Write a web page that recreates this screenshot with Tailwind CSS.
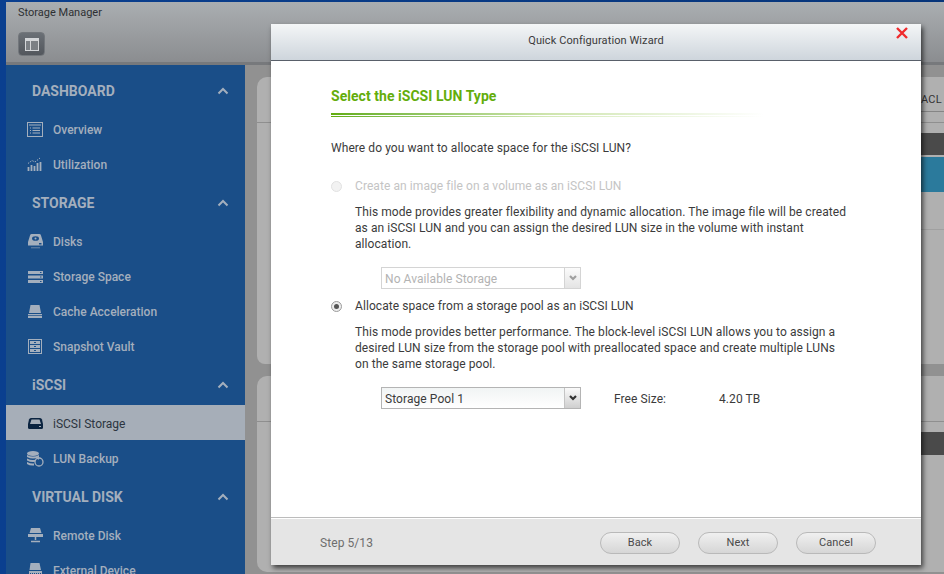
<!DOCTYPE html>
<html>
<head>
<meta charset="utf-8">
<script src="https://cdn.jsdelivr.net/npm/@tailwindcss/browser@4"></script>
</head>
<body class="m-0">
<div class="relative w-[944px] h-[574px] overflow-hidden bg-gradient-to-r from-[#0a3f8f] to-[#07357a] pl-[6px] pt-[2px] font-['Roboto','Liberation_Sans',sans-serif]">
  <div class="flex flex-col h-[572px] w-[938px]">
    <header class="h-[63px] shrink-0 border-b-[3px] border-[#77797c] bg-gradient-to-b from-[#aaaeb1] to-[#8b8d90] pl-[12px] pt-[4px]">
      <div class="text-[11px] leading-[13px] text-[#2e3033]">Storage Manager</div>
      <div class="mt-[13px] w-[27px] h-[24px] rounded-[4px] border border-[#73777c] bg-gradient-to-b from-[#6b7076] to-[#53575d] flex items-center justify-center">
        <svg width="14" height="13" viewBox="0 0 14 13"><rect width="14" height="13" fill="#d4d6d9"/><rect x="1" y="3" width="4" height="9" fill="#7c8085"/><rect x="6" y="3" width="7" height="9" fill="#7c8085"/></svg>
      </div>
    </header>
    <div class="flex flex-1 min-h-0">
      <nav class="w-[239px] shrink-0 bg-[#1a4e88] pt-[5px] text-[#a4afbd] overflow-hidden">
        <div class="h-[42px] pl-[26px] pr-[16px] flex items-center justify-between text-[14px] font-bold"><span>DASHBOARD</span><svg width="12" height="8" viewBox="0 0 12 8"><path d="M1.500 6.500 6 2l4.500 4.500" fill="none" stroke="#a4afbd" stroke-width="2"/></svg></div>
        <div class="h-[35px] flex items-center text-[12px] font-medium"><span class="w-[47px] pl-[21px] shrink-0"><svg width="16" height="15" viewBox="0 0 16 15"><rect x=".5" y=".5" width="15" height="14" fill="none" stroke="#a4afbd"/><path d="M2 3h12M3 6h1M5.500 6H13M3 8.500h1M5.500 8.500H13M3 11h1M5.500 11H13" stroke="#a4afbd" stroke-width="1.200"/></svg></span>Overview</div>
        <div class="h-[35px] flex items-center text-[12px] font-medium"><span class="w-[47px] pl-[21px] shrink-0"><svg width="16" height="15" viewBox="0 0 16 15"><path d="M1.500 14V10M4.500 14V8M7.500 14V9M10.500 14V6M13.500 14V5" stroke="#a4afbd" stroke-width="1.800"/><path d="M1 6.500 5 3.500 8 5 13 1" fill="none" stroke="#a4afbd" stroke-dasharray="1.500 1.200"/></svg></span>Utilization</div>

        <div class="h-[42px] pl-[26px] pr-[16px] flex items-center justify-between text-[14px] font-bold"><span>STORAGE</span><svg width="12" height="8" viewBox="0 0 12 8"><path d="M1.500 6.500 6 2l4.500 4.500" fill="none" stroke="#a4afbd" stroke-width="2"/></svg></div>
        <div class="h-[35px] flex items-center text-[12px] font-medium"><span class="w-[47px] pl-[22px] shrink-0"><svg width="15" height="15" viewBox="0 0 15 15"><path d="M2 1.500Q2 0 3.500 0h8Q13 0 13 1.500L15 8v3.500H0V8z" fill="#a4afbd"/><ellipse cx="7.500" cy="4.500" rx="3.500" ry="2.300" fill="#1a4e88"/><circle cx="7.500" cy="4.500" r="1" fill="#a4afbd"/><rect x="11" y="9" width="2.500" height="1.500" fill="#1a4e88"/><path d="M3 13.800h9" stroke="#a4afbd" stroke-opacity=".6"/></svg></span>Disks</div>
        <div class="h-[35px] flex items-center text-[12px] font-medium"><span class="w-[47px] pl-[22px] shrink-0"><svg width="15" height="12" viewBox="0 0 15 12"><path d="M0 0h15v3H0zM0 4.500h15v3H0zM0 9h15v3H0z" fill="#a4afbd"/><path d="M12 1.500h1.500M12 6h1.500M12 10.500h1.500" stroke="#1a4e88"/></svg></span>Storage Space</div>
        <div class="h-[35px] flex items-center text-[12px] font-medium"><span class="w-[47px] pl-[22px] shrink-0"><svg width="14" height="13" viewBox="0 0 14 13"><path d="M2.500 0h9L13 8H1z" fill="#a4afbd"/><path d="M0 9h14v4H0z" fill="#a4afbd"/><path d="M0 10.500h14" stroke="#1a4e88" stroke-width=".7"/></svg></span>Cache Acceleration</div>
        <div class="h-[35px] flex items-center text-[12px] font-medium"><span class="w-[47px] pl-[22px] shrink-0"><svg width="14" height="15" viewBox="0 0 14 15"><rect x=".5" y=".5" width="13" height="14" fill="none" stroke="#a4afbd"/><path d="M2 2h10v3H2zM2 6h10v3H2zM2 10h10v3H2z" fill="#a4afbd"/><path d="M6 3.500h2M6 7.500h2M6 11.500h2" stroke="#1a4e88"/></svg></span>Snapshot Vault</div>

        <div class="h-[41px] pt-[2px] pl-[26px] pr-[16px] flex items-center justify-between text-[14px] font-bold"><span>iSCSI</span><svg class="-mt-[2px]" width="12" height="8" viewBox="0 0 12 8"><path d="M1.500 6.500 6 2l4.500 4.500" fill="none" stroke="#a4afbd" stroke-width="2"/></svg></div>
        <div class="h-[35px] pt-[2px] flex items-center text-[12px] bg-[#a6aeb8] text-[#2c3540]"><span class="w-[47px] pl-[22px] shrink-0"><svg width="15" height="11" viewBox="0 0 15 11"><path d="M3 0h9q1.500 0 2 1.500L15 6v3.500q0 1.500-1.500 1.500h-12Q0 11 0 9.500V6l1-4.500Q1.500 0 3 0z" fill="#0b2440"/><path d="M3.500 1.500h8L13 6H2z" fill="#a6aeb8"/><path d="M11 8.500h2" stroke="#a6aeb8"/></svg></span>iSCSI Storage</div>
        <div class="h-[36px] pt-[1px] flex items-center text-[12px] font-medium"><span class="w-[47px] pl-[21px] shrink-0"><svg width="17" height="16" viewBox="0 0 17 16"><ellipse cx="6" cy="2.500" rx="6" ry="2.500" fill="#a4afbd"/><path d="M0 4q6 3 12 0v2q-6 3-12 0zM0 7.500q6 3 12 0v2q-6 3-12 0zM0 11q4 2 7 1.500v2q-4 .5-7-1.500z" fill="#a4afbd"/><circle cx="12" cy="11" r="4" fill="#1a4e88" stroke="#a4afbd" stroke-width="1.300"/><path d="M9 6.500 12.500 6l-1 3z" fill="#a4afbd"/></svg></span>LUN Backup</div>

        <div class="h-[42px] pl-[26px] pr-[16px] flex items-center justify-between text-[14px] font-bold"><span>VIRTUAL DISK</span><svg width="12" height="8" viewBox="0 0 12 8"><path d="M1.500 6.500 6 2l4.500 4.500" fill="none" stroke="#a4afbd" stroke-width="2"/></svg></div>
        <div class="h-[35px] flex items-center text-[12px] font-medium"><span class="w-[47px] pl-[22px] shrink-0"><svg width="15" height="15" viewBox="0 0 15 15"><path d="M3 0h9l1.500 5H1.500z" fill="#a4afbd"/><path d="M0 6h15v3H0z" fill="#a4afbd"/><path d="M7.500 9v3M3 13.500h9" stroke="#a4afbd" stroke-width="1.500"/></svg></span>Remote Disk</div>
        <div class="h-[35px] flex items-center text-[12px] font-medium"><span class="w-[47px] pl-[22px] shrink-0"><svg width="15" height="15" viewBox="0 0 15 15"><path d="M2.500 0h9L13 7H1.500z" fill="#a4afbd"/><path d="M1 8h13v6H1z" fill="#a4afbd"/><path d="M2 10.500h11" stroke="#1a4e88" stroke-dasharray="1 1"/></svg></span>External Device</div>
      </nav>
      <main class="flex-1 min-w-0 bg-[#919191] pl-[12px] pt-[12px]">
        <section class="h-[287px] rounded-tl-[10px] rounded-bl-[8px] bg-[#b0b0b0] flex flex-col">
          <div class="h-[35px] pl-[20px]"><div class="mt-[10px] h-[25px] pt-[3px] border-b border-[#858585] flex justify-end items-center pr-[2px] text-[11px] tracking-[0.3px] text-[#333]">ACL</div></div>
          <div class="h-[10px] border-b border-[#8f8f8f] box-content"></div>
          <div class="ml-[20px] mt-[10px] h-[22px] bg-[#4a4a4a] shrink-0"></div>
          <div class="ml-[20px] mt-[2px] h-[35px] bg-[#2b7a9c] shrink-0"></div>
          <div class="ml-[20px] mt-[37px] h-px bg-[#a0a0a0] shrink-0"></div>
        </section>
        <section class="mt-[12px] h-[196px] rounded-l-[10px] bg-[#b0b0b0] flex flex-col">
          <div class="h-[45px] border-b border-[#8f8f8f] box-content"></div>
          <div class="ml-[20px] mt-[10px] h-[23px] bg-[#4a4a4a] shrink-0"></div>
        </section>
      </main>
    </div>
  </div>

  <div class="absolute left-[271px] top-[24px] w-[650px] h-[541px] flex flex-col bg-white shadow-[2px_3px_5px_rgba(0,0,0,0.65)]">
    <div class="relative h-[37px] shrink-0 border-b border-[#59606a] bg-gradient-to-b from-[#f4f6f7] to-[#ced5dc] flex items-center justify-center text-[11px] text-[#3a3a3a] pb-[2px] tracking-[0.09px]">
      Quick Configuration Wizard
      <svg class="absolute right-[13px] top-[3px]" width="12" height="12" viewBox="0 0 12 12"><path d="M1 1l10 10M11 1 1 11" stroke="#ef2b2d" stroke-width="2.400"/></svg>
    </div>
    <div class="flex-1 pl-[60px] pt-[25px] text-[12px] leading-[16px] tracking-[0.075px] text-[#3b3b3b]">
      <h1 class="text-[14px] leading-[20px] font-bold tracking-[0.04px] text-[#63ad0b]">Select the iSCSI LUN Type</h1>
      <div class="mt-[7px] w-[433px] h-[2px] bg-gradient-to-r from-[#63ad0b] via-[#cfe5ae] to-white"></div>
      <div class="mt-[1px] w-[433px] h-px bg-gradient-to-r from-[#63ad0b] via-[#d5e9b8] to-white"></div>
      <p class="mt-[23px]">Where do you want to allocate space for the iSCSI LUN?</p>

      <label class="mt-[22px] flex items-center h-[16px] text-[#c4c4c4]"><span class="w-[11px] h-[11px] rounded-full border border-[#e2e2e2] bg-[#f2f2f2] mr-[13px] ml-0"></span>Create an image file on a volume as an iSCSI LUN</label>
      <p class="mt-[10px] ml-[24px] w-[540px]">This mode provides greater flexibility and dynamic allocation. The image file will be created<br>as an iSCSI LUN and you can assign the desired LUN size in the volume with instant<br>allocation.</p>
      <div class="mt-[15px] ml-[50px] w-[200px] h-[22px] border border-[#d4d4d4] flex items-center text-[#b3b3b3] pl-[3px] justify-between">
        <span class="mt-[2px]">No Available Storage</span>
        <span class="w-[16px] h-[20px] border-l border-[#d4d4d4] bg-gradient-to-b from-[#fbfbfb] to-[#e4e4e4] flex items-center justify-center"><svg width="8" height="6" viewBox="0 0 8 6"><path d="M1 1l3 3 3-3" fill="none" stroke="#a0a0a0" stroke-width="2.200"/></svg></span>
      </div>
      <label class="mt-[9px] flex items-center h-[16px]"><span class="w-[11px] h-[11px] rounded-full border border-[#9c9c9c] bg-[#ececec] mr-[13px] flex items-center justify-center"><span class="w-[5px] h-[5px] rounded-full bg-[#555]"></span></span>Allocate space from a storage pool as an iSCSI LUN</label>
      <p class="mt-[10px] ml-[24px] w-[540px]">This mode provides better performance. The block-level iSCSI LUN allows you to assign a<br>desired LUN size from the storage pool with preallocated space and create multiple LUNs<br>on the same storage pool.</p>
      <div class="mt-[15px] ml-[50px] flex items-center">
        <div class="w-[200px] h-[22px] border border-[#b4b4b4] flex items-center pl-[3px] justify-between bg-gradient-to-b from-[#f1f4f4] to-white">
          <span class="mt-[2px]">Storage Pool 1</span>
          <span class="w-[16px] h-[20px] border-l border-[#c4c4c4] bg-gradient-to-b from-[#fafafa] to-[#cfcfcf] flex items-center justify-center"><svg width="8" height="6" viewBox="0 0 8 6"><path d="M1 1l3 3 3-3" fill="none" stroke="#333" stroke-width="2.200"/></svg></span>
        </div>
        <span class="ml-[33px] w-[105px] mt-[2px]">Free Size:</span><span class="mt-[2px]">4.20 TB</span>
      </div>
    </div>
    <div class="h-[48px] shrink-0 border-t border-[#bcbcbc] bg-[#e5e5e5] shadow-[inset_0_1px_0_#fff] flex items-center pt-[2px] pl-[49px] pr-[45px] text-[12px] tracking-[0.075px] text-[#6e6e6e]">
      <span class="flex-1">Step 5/13</span>
      <div class="flex gap-[18px] text-[#4a4a4a] text-[11px]">
        <button class="w-[80px] h-[22px] pt-[2px] rounded-full border border-[#b9b9b9] bg-gradient-to-b from-[#f0f0f0] to-[#d6d6d6]">Back</button>
        <button class="w-[80px] h-[22px] pt-[2px] rounded-full border border-[#b9b9b9] bg-gradient-to-b from-[#f0f0f0] to-[#d6d6d6]">Next</button>
        <button class="w-[80px] h-[22px] pt-[2px] rounded-full border border-[#b9b9b9] bg-gradient-to-b from-[#f0f0f0] to-[#d6d6d6]">Cancel</button>
      </div>
    </div>
  </div>
</div>
</body>
</html>
